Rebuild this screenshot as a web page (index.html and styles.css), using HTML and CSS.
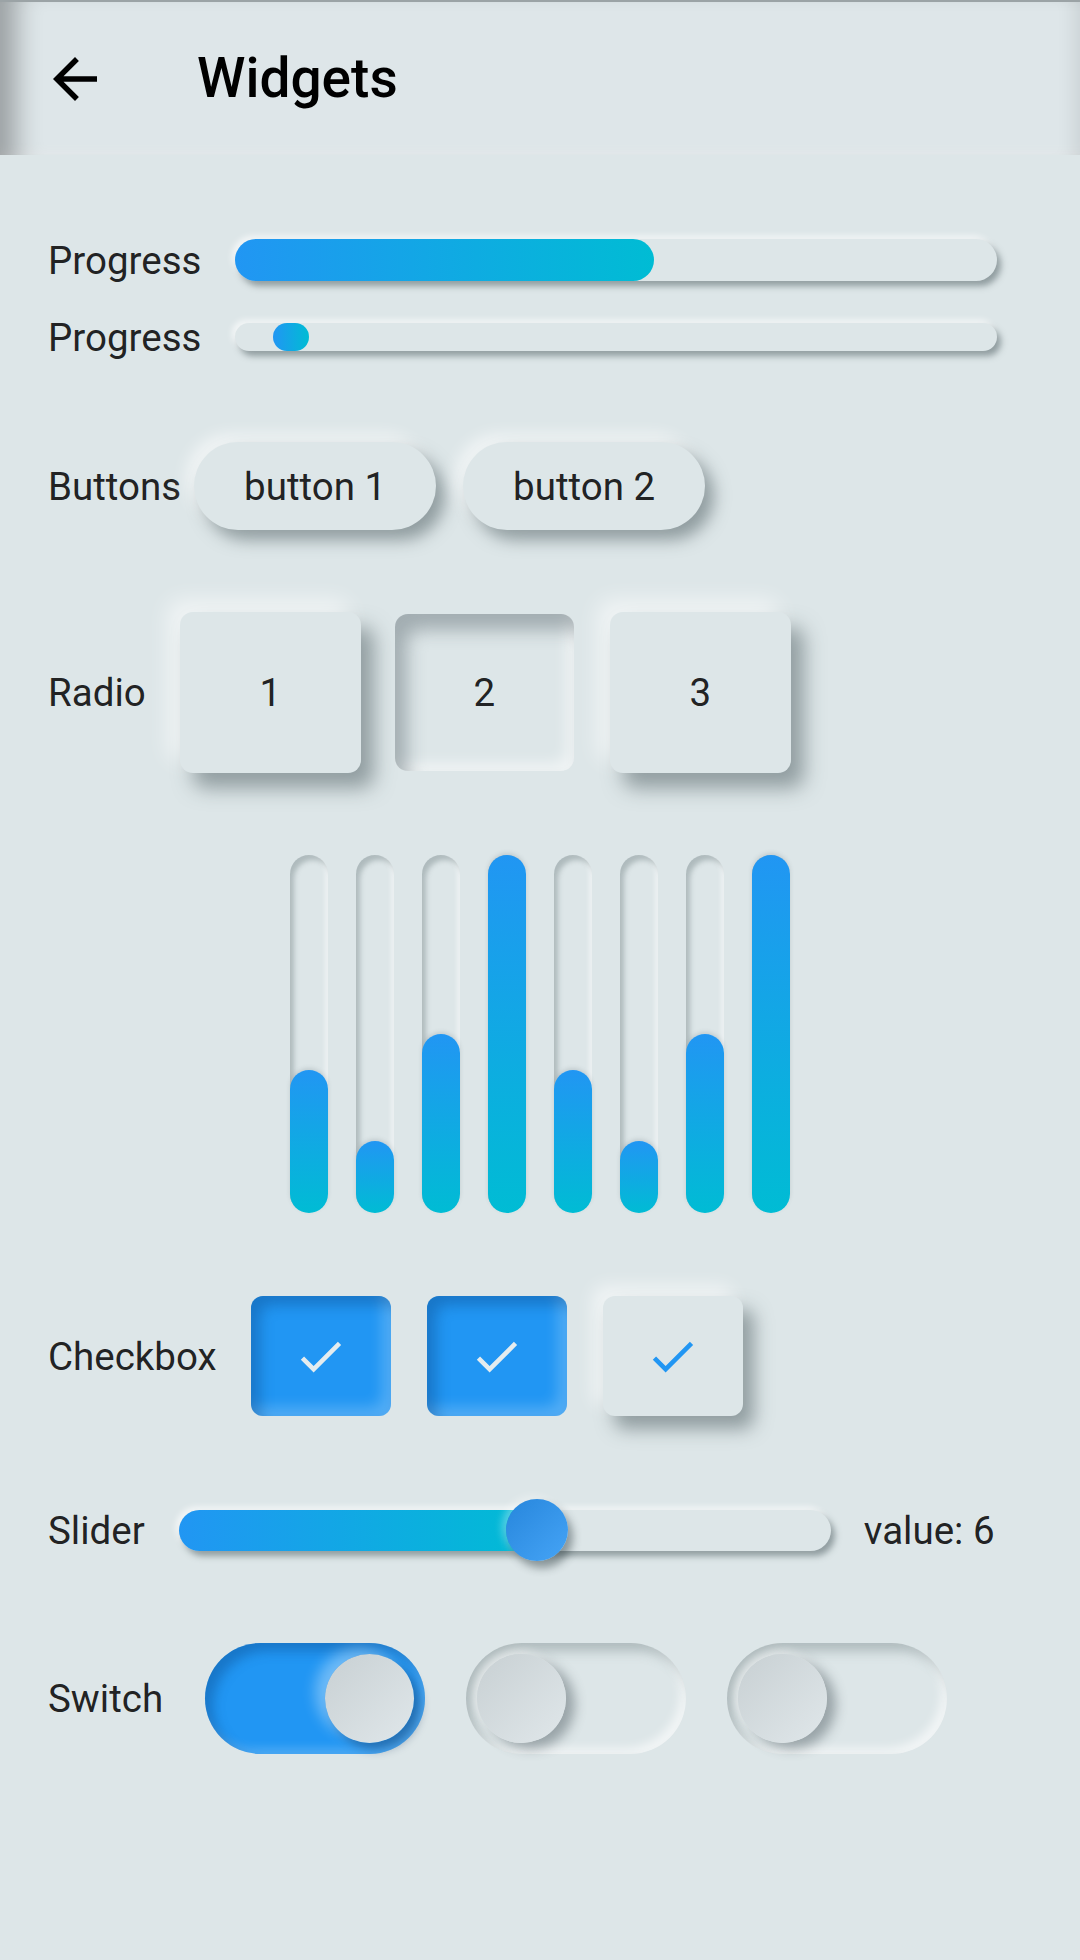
FILE: index.html
```
<!DOCTYPE html>
<html>
<head>
<meta charset="utf-8">
<link rel="stylesheet" href="styles.css">
</head>
<body>
<div class="app">
  <header class="appbar">
    <svg class="back" viewBox="0 0 24 24"><path d="M20 11H7.83l5.59-5.59L12 4l-8 8 8 8 1.41-1.41L7.83 13H20v-2z"/></svg>
    <h1 class="title">Widgets</h1>
  </header>
  <main class="content">
    <div class="row row-progress1">
      <span class="label">Progress</span>
      <div class="progress progress-lg"><div class="progress-fill" style="width:55%"></div></div>
    </div>
    <div class="row row-progress2">
      <span class="label">Progress</span>
      <div class="progress progress-sm"><div class="progress-fill progress-fill-ind"></div></div>
    </div>
    <div class="row row-buttons">
      <span class="label label-tight">Buttons</span>
      <div class="btn">button 1</div>
      <div class="btn">button 2</div>
    </div>
    <div class="row row-radio">
      <span class="label">Radio</span>
      <div class="radio">1</div>
      <div class="radio radio-pressed">2</div>
      <div class="radio">3</div>
    </div>
    <div class="row-bars">
      <div class="track"><div class="bar-fill" style="height:40%"></div></div>
      <div class="track"><div class="bar-fill" style="height:20%"></div></div>
      <div class="track"><div class="bar-fill" style="height:50%"></div></div>
      <div class="track"><div class="bar-fill" style="height:100%"></div></div>
      <div class="track"><div class="bar-fill" style="height:40%"></div></div>
      <div class="track"><div class="bar-fill" style="height:20%"></div></div>
      <div class="track"><div class="bar-fill" style="height:50%"></div></div>
      <div class="track"><div class="bar-fill" style="height:100%"></div></div>
    </div>
    <div class="row row-check">
      <span class="label">Checkbox</span>
      <div class="check check-on"><svg class="tick" viewBox="0 0 24 24"><path d="M9 16.17L4.83 12l-1.42 1.41L9 19 21 7l-1.41-1.41z"/></svg></div>
      <div class="check check-on"><svg class="tick" viewBox="0 0 24 24"><path d="M9 16.17L4.83 12l-1.42 1.41L9 19 21 7l-1.41-1.41z"/></svg></div>
      <div class="check check-off"><svg class="tick" viewBox="0 0 24 24"><path d="M9 16.17L4.83 12l-1.42 1.41L9 19 21 7l-1.41-1.41z"/></svg></div>
    </div>
    <div class="row row-slider">
      <span class="label">Slider</span>
      <div class="slider">
        <div class="slider-fill" style="width:55%"></div>
        <div class="thumb" style="left:55%"></div>
      </div>
      <span class="value">value: 6</span>
    </div>
    <div class="row row-switch">
      <span class="label">Switch</span>
      <div class="switches">
        <div class="switch switch-on"><div class="knob"></div></div>
        <div class="switch switch-off"><div class="knob"></div></div>
        <div class="switch switch-off"><div class="knob"></div></div>
      </div>
    </div>
  </main>
</div>
</body>
</html>
```
FILE: styles.css
```
html, body {
  margin: 0;
  padding: 0;
}
body {
  background: #dde6e8;
  font-family: Roboto, "Noto Sans", sans-serif;
  color: rgba(0, 0, 0, 0.87);
  width: 1080px;
  height: 1960px;
  overflow: hidden;
}
.app {
  width: 1080px;
}
.appbar {
  box-sizing: border-box;
  height: 155px;
  border-top: 2px solid #9ba3a6;
  display: flex;
  align-items: center;
  padding-left: 42px;
  background: #dee6e9;
  box-shadow: inset 34px 0 26px -18px rgba(0, 0, 0, 0.3),
              inset -20px 0 20px -16px rgba(0, 0, 0, 0.1),
              inset 0 -10px 14px -10px rgba(255, 255, 255, 0.5);
}
.back {
  width: 66px;
  height: 66px;
  fill: #000;
  flex: none;
}
.title {
  margin: 0 0 0 89px;
  font-size: 55px;
  font-weight: 500;
  color: #000;
  line-height: 1;
}
.content {
  display: flex;
  flex-direction: column;
}
.row {
  display: flex;
  align-items: center;
  padding-left: 48px;
}
.label {
  font-size: 38.5px;
  margin-right: 34px;
  white-space: nowrap;
  flex: none;
}
.label-tight {
  margin-right: 13px;
}
.row-progress1 { margin-top: 84px; height: 42px; }
.row-progress2 { margin-top: 42px; height: 28px; }
.row-buttons { margin-top: 91px; height: 88px; }
.row-radio { margin-top: 82px; height: 161px; }
.row-bars { margin-top: 82px; height: 358px; }
.row-check { margin-top: 83px; height: 120px; }
.row-slider { margin-top: 83px; height: 62px; }
.row-switch { margin-top: 82px; height: 111px; }

/* progress */
.progress {
  width: 762px;
  flex: none;
  background: #dde6e8;
  border-radius: 30px;
  display: flex;
  box-shadow: 4px 5px 6px rgba(70, 85, 90, 0.5), -3px -3px 6px rgba(255, 255, 255, 0.7);
}
.progress-lg { height: 42px; }
.progress-sm { height: 28px; }
.progress-fill {
  height: 100%;
  border-radius: 30px;
  background: linear-gradient(90deg, #2196f3, #00bcd4);
}
.progress-fill-ind {
  width: 36px;
  margin-left: 38px;
}

/* buttons */
.btn {
  width: 242px;
  height: 88px;
  border-radius: 44px;
  background: #dde6e8;
  display: flex;
  align-items: center;
  justify-content: center;
  font-size: 38.5px;
  flex: none;
  box-shadow: 9px 10px 16px rgba(70, 85, 90, 0.5), -8px -8px 16px rgba(255, 255, 255, 0.6);
}
.btn + .btn {
  margin-left: 27px;
}

/* radio */
.radio {
  box-sizing: border-box;
  width: 181px;
  height: 161px;
  border-radius: 13px;
  background: #dde6e8;
  display: flex;
  align-items: center;
  justify-content: center;
  font-size: 38.5px;
  flex: none;
  box-shadow: 13px 15px 20px rgba(70, 85, 90, 0.5), -12px -12px 22px rgba(255, 255, 255, 0.6);
}
.radio + .radio {
  margin-left: 34px;
}
.radio-pressed {
  width: 179px;
  height: 157px;
  margin-right: 2px;
  box-shadow: inset 12px 16px 18px rgba(90, 105, 110, 0.45), inset -8px -8px 14px rgba(255, 255, 255, 0.55);
}

/* bars */
.row-bars {
  display: flex;
  justify-content: center;
  gap: 28px;
}
.track {
  width: 38px;
  height: 100%;
  border-radius: 19px;
  background: #dde6e8;
  display: flex;
  flex-direction: column;
  justify-content: flex-end;
  box-shadow: inset 4px 5px 5px rgba(90, 105, 110, 0.35), inset -3px -2px 4px rgba(255, 255, 255, 0.5);
}
.bar-fill {
  width: 100%;
  border-radius: 19px;
  background: linear-gradient(180deg, #2196f3, #00bcd4);
  box-shadow: 0 -2px 4px rgba(90, 105, 110, 0.2);
}

/* checkbox */
.check {
  width: 140px;
  height: 120px;
  border-radius: 12px;
  display: flex;
  align-items: center;
  justify-content: center;
  flex: none;
}
.check + .check {
  margin-left: 36px;
}
.check-on {
  background: #2196f3;
  box-shadow: inset 9px 9px 14px rgba(10, 60, 120, 0.35), inset -9px -9px 14px rgba(255, 255, 255, 0.22);
}
.check-on .tick {
  fill: #e4ecef;
}
.check-off {
  background: #dde6e8;
  box-shadow: 11px 13px 18px rgba(70, 85, 90, 0.5), -10px -10px 18px rgba(255, 255, 255, 0.6);
}
.check-off .tick {
  fill: #2196f3;
}
.tick {
  width: 55px;
  height: 55px;
}

/* slider */
.slider {
  position: relative;
  width: 652px;
  height: 41px;
  flex: none;
  border-radius: 21px;
  background: #dde6e8;
  display: flex;
  box-shadow: 4px 5px 6px rgba(70, 85, 90, 0.5), -3px -3px 6px rgba(255, 255, 255, 0.7);
}
.slider-fill {
  height: 100%;
  border-radius: 21px 0 0 21px;
  background: linear-gradient(90deg, #2196f3, #00bcd4);
}
.thumb {
  position: absolute;
  top: 50%;
  width: 62px;
  height: 62px;
  border-radius: 50%;
  transform: translate(-50%, -50%);
  background: linear-gradient(135deg, #2786dc, #45a4f6);
  box-shadow: 5px 7px 9px rgba(40, 55, 60, 0.45), -4px -3px 8px rgba(255, 255, 255, 0.35);
}
.value {
  font-size: 38.5px;
  margin-left: 33px;
  white-space: nowrap;
}

/* switches */
.switches {
  display: flex;
  gap: 41px;
  margin-left: 8px;
}
.switch {
  box-sizing: border-box;
  width: 220px;
  height: 111px;
  border-radius: 56px;
  padding: 0 11px;
  display: flex;
  align-items: center;
  flex: none;
}
.switch-on {
  background: #2196f3;
  justify-content: flex-end;
  box-shadow: inset 8px 8px 12px rgba(10, 60, 120, 0.35), inset -6px -6px 10px rgba(255, 255, 255, 0.2);
}
.switch-off {
  background: #dde6e8;
  justify-content: flex-start;
  box-shadow: inset 8px 8px 12px rgba(90, 105, 110, 0.35), inset -6px -6px 10px rgba(255, 255, 255, 0.6);
}
.knob {
  width: 89px;
  height: 89px;
  border-radius: 50%;
  background: linear-gradient(135deg, #c8d0d3, #e0e7ea);
}
.switch-on .knob {
  box-shadow: 7px 7px 10px rgba(20, 50, 90, 0.4), -10px -6px 14px rgba(255, 255, 255, 0.35);
}
.switch-off .knob {
  box-shadow: 9px 6px 12px rgba(70, 85, 90, 0.45), -4px -4px 8px rgba(255, 255, 255, 0.5);
}
```
